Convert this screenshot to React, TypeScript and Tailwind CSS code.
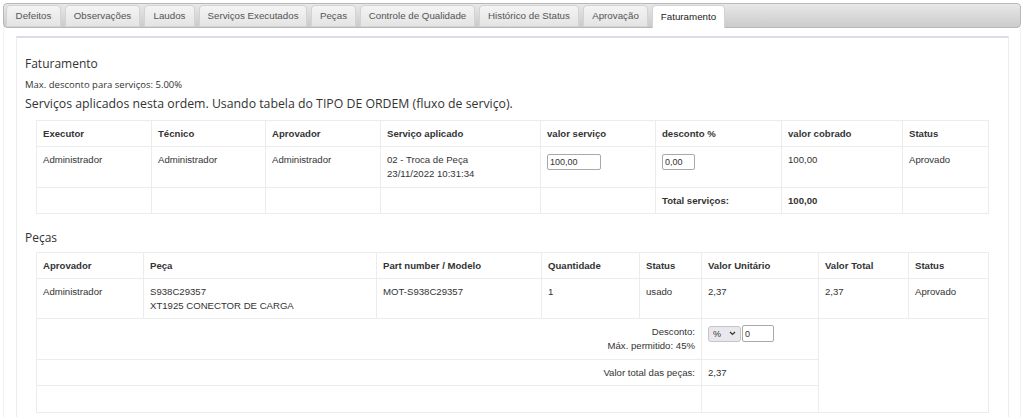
import React from "react";

const tabs: [string, number][] = [
  ["Defeitos", 55],
  ["Observações", 75],
  ["Laudos", 51],
  ["Serviços Executados", 108],
  ["Peças", 45],
  ["Controle de Qualidade", 115],
  ["Histórico de Status", 100],
  ["Aprovação", 65],
  ["Faturamento", 73],
];

const cell = "border border-[#ececec] px-[6px] pt-[6px] pb-[5px] align-top leading-[14px]";
const th = "border border-[#ececec] px-[6px] pt-[6px] pb-[5px] align-top leading-[14px] text-left font-bold";

function Input({ value, w }: { value: string; w: string }) {
  return (
    <input
      readOnly
      defaultValue={value}
      className={`${w} h-[16px] border border-[#a9a9a9] rounded-[2px] px-[2px] text-[9px] text-[#333] bg-white outline-none font-['Liberation_Sans',Arial,sans-serif]`}
    />
  );
}

export default function App() {
  return (
    <div className="w-[1024px] h-[417px] overflow-hidden bg-white text-[#333] font-['Liberation_Sans',Arial,sans-serif] text-[9.6px]">
      <div className="pl-[3px] pt-[3px]">
        {/* tab bar */}
        <div className="relative w-[1018px] h-[25px] border border-[#b8b8b8] rounded-[4px] bg-gradient-to-b from-[#e8e8e8] to-[#cbcbcb] flex items-end gap-[4px] pl-[2px]">
          {tabs.map(([t, w], i) => {
            const active = i === tabs.length - 1;
            return (
              <div
                key={t}
                style={{ width: w }}
                className={
                  active
                    ? "h-[23px] mb-[-1px] border border-b-0 border-[#d3d3d3] rounded-t-[4px] bg-white text-[#212121] flex items-center justify-center text-[9.75px] leading-none"
                    : "h-[22px] border border-[#d3d3d3] rounded-t-[4px] bg-gradient-to-b from-[#f4f4f4] to-[#e4e4e4] text-[#555] flex items-center justify-center text-[9.75px] leading-none"
                }
              >
                {t}
              </div>
            );
          })}
        </div>
        {/* outer container body */}
        <div className="w-[1018px] h-[400px] border-l border-r border-[#f1f1f1] pt-[8px] pl-[12px]">
          <div className="w-[993px] h-[400px] border-t-2 border-t-[#d9dee6] border-l border-r border-[#ededed] pl-[8px]">
            <div className="font-['Open_Sans',sans-serif] text-[12px] leading-[16px] mt-[18px] text-[#333]">
              Faturamento
            </div>
            <div className="font-['Open_Sans',sans-serif] text-[9.5px] leading-[13px] mt-[6px]">
              Max. desconto para serviços: 5.00%
            </div>
            <div className="font-['Open_Sans',sans-serif] text-[12.3px] leading-[16px] mt-[5px]">
              Serviços aplicados nesta ordem. Usando tabela do TIPO DE ORDEM (fluxo de serviço).
            </div>

            <table className="table-fixed border-collapse w-[952px] ml-[11px] mt-[8px]">
              <colgroup>
                {[115, 114, 115, 160, 115, 126, 121, 86].map((w, i) => (
                  <col key={i} style={{ width: w }} />
                ))}
              </colgroup>
              <thead>
                <tr>
                  <th className={th}>Executor</th>
                  <th className={th}>Técnico</th>
                  <th className={th}>Aprovador</th>
                  <th className={th}>Serviço aplicado</th>
                  <th className={th}>valor serviço</th>
                  <th className={th}>desconto %</th>
                  <th className={th}>valor cobrado</th>
                  <th className={th}>Status</th>
                </tr>
              </thead>
              <tbody>
                <tr className="h-[41px]">
                  <td className={cell}>Administrador</td>
                  <td className={cell}>Administrador</td>
                  <td className={cell}>Administrador</td>
                  <td className={cell}>
                    02 - Troca de Peça
                    <br />
                    23/11/2022 10:31:34
                  </td>
                  <td className={cell}>
                    <div className="pt-[1px]">
                      <Input value="100,00" w="w-[54px]" />
                    </div>
                  </td>
                  <td className={cell}>
                    <div className="pt-[1px]">
                      <Input value="0,00" w="w-[33px]" />
                    </div>
                  </td>
                  <td className={cell}>100,00</td>
                  <td className={cell}>Aprovado</td>
                </tr>
                <tr>
                  <td className={cell}>&nbsp;</td>
                  <td className={cell}></td>
                  <td className={cell}></td>
                  <td className={cell}></td>
                  <td className={cell}></td>
                  <td className={`${cell} font-bold`}>Total serviços:</td>
                  <td className={`${cell} font-bold`}>100,00</td>
                  <td className={cell}></td>
                </tr>
              </tbody>
            </table>

            <div className="font-['Open_Sans',sans-serif] text-[12px] leading-[16px] mt-[16px]">
              Peças
            </div>

            <table className="table-fixed border-collapse w-[952px] ml-[11px] mt-[6px]">
              <colgroup>
                {[107, 233, 165, 98, 62, 117, 90, 80].map((w, i) => (
                  <col key={i} style={{ width: w }} />
                ))}
              </colgroup>
              <thead>
                <tr>
                  <th className={th}>Aprovador</th>
                  <th className={th}>Peça</th>
                  <th className={th}>Part number / Modelo</th>
                  <th className={th}>Quantidade</th>
                  <th className={th}>Status</th>
                  <th className={th}>Valor Unitário</th>
                  <th className={th}>Valor Total</th>
                  <th className={th}>Status</th>
                </tr>
              </thead>
              <tbody>
                <tr>
                  <td className={cell}>Administrador</td>
                  <td className={cell}>
                    S938C29357
                    <br />
                    XT1925 CONECTOR DE CARGA
                  </td>
                  <td className={cell}>MOT-S938C29357</td>
                  <td className={cell}>1</td>
                  <td className={cell}>usado</td>
                  <td className={cell}>2,37</td>
                  <td className={cell}>2,37</td>
                  <td className={cell}>Aprovado</td>
                </tr>
                <tr className="h-[41px]">
                  <td colSpan={5} className={`${cell} text-right`}>
                    Desconto:
                    <br />
                    Máx. permitido: 45%
                  </td>
                  <td className={cell}>
                    <div className="flex items-center gap-[1px]">
                      <div className="w-[33px] h-[16px] rounded-[3px] border border-[#c4c4c9] bg-[#e9e9ed] flex items-center justify-between px-[4px] text-[9px]">
                        <span>%</span>
                        <svg width="7" height="5" viewBox="0 0 7 5">
                          <path d="M1 1l2.5 2.5L6 1" fill="none" stroke="#333" strokeWidth="1.2" />
                        </svg>
                      </div>
                      <Input value="0" w="w-[32px] h-[17px]" />
                    </div>
                  </td>
                  <td colSpan={2} rowSpan={3} className={cell}></td>
                </tr>
                <tr>
                  <td colSpan={5} className={`${cell} text-right`}>
                    Valor total das peças:
                  </td>
                  <td className={cell}>2,37</td>
                </tr>
                <tr className="h-[27px]">
                  <td colSpan={5} className={cell}>&nbsp;</td>
                  <td className={cell}></td>
                </tr>
              </tbody>
            </table>
          </div>
        </div>
      </div>
    </div>
  );
}
